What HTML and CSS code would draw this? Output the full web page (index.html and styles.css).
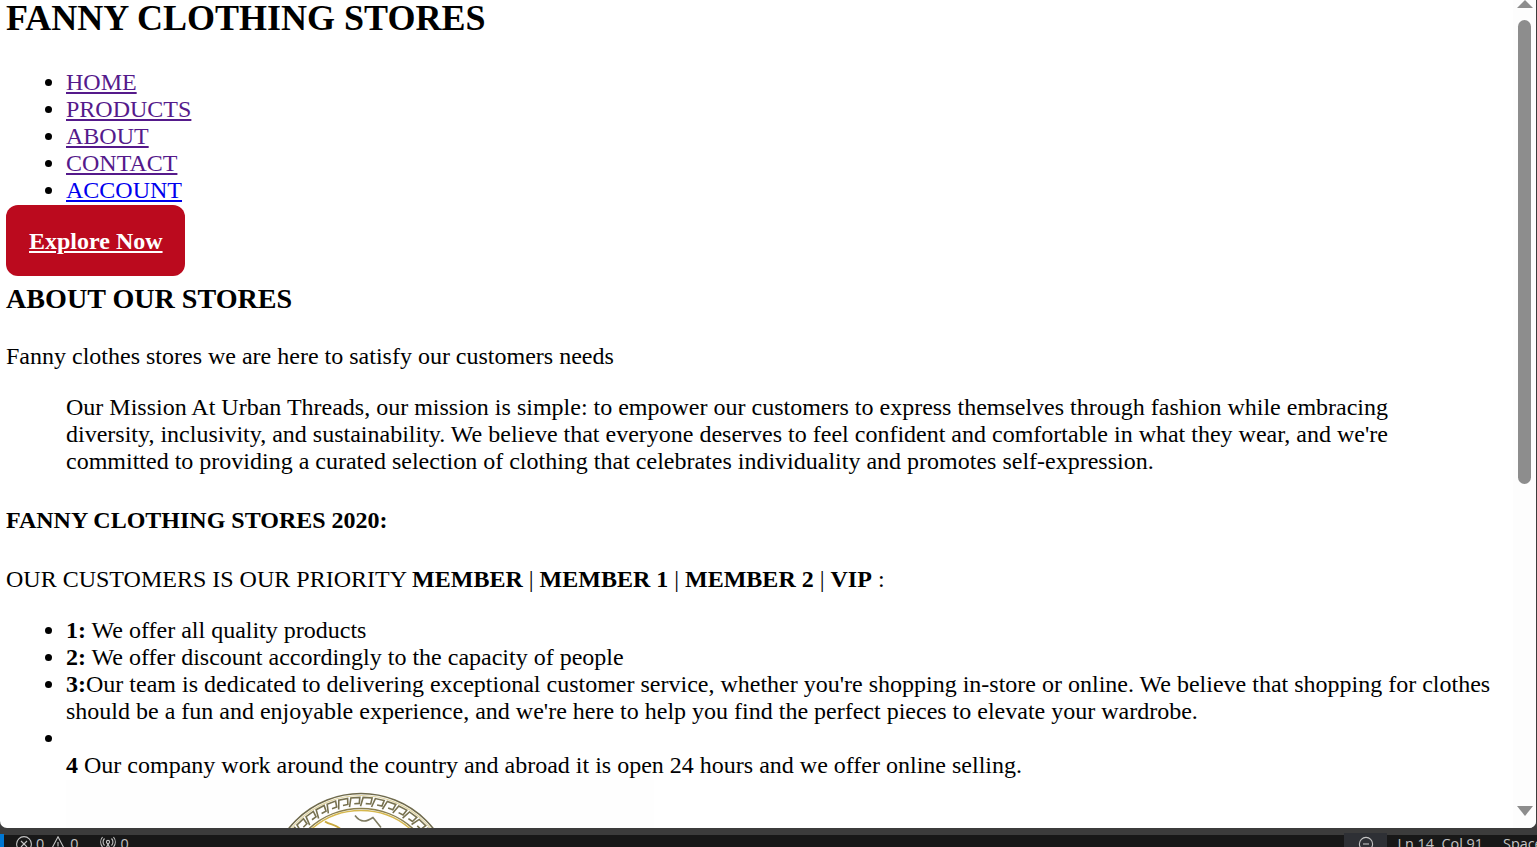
FILE: index.html
```html
<!DOCTYPE html>
<html lang="en">
<head>
<meta charset="utf-8">
<title>Fanny Clothing Stores</title>
<link rel="stylesheet" href="styles.css">
</head>
<body>
<div class="window">
  <div class="pane">
    <main class="page">
      <h1 class="title">FANNY CLOTHING STORES</h1>
      <ul class="list nav">
        <li><a class="visited" href="#home">HOME</a></li>
        <li><a class="visited" href="#products">PRODUCTS</a></li>
        <li><a class="visited" href="#about">ABOUT</a></li>
        <li><a class="visited" href="#contact">CONTACT</a></li>
        <li><a class="fresh" href="#account">ACCOUNT</a></li>
      </ul>
      <a class="cta" href="#explore">Explore Now</a>
      <h2 class="section">ABOUT OUR STORES</h2>
      <p class="intro">Fanny clothes stores we are here to satisfy our customers needs</p>
      <blockquote class="mission">Our Mission At Urban Threads, our mission is simple: to empower our customers to express themselves through fashion while embracing diversity, inclusivity, and sustainability. We believe that everyone deserves to feel confident and comfortable in what they wear, and we're committed to providing a curated selection of clothing that celebrates individuality and promotes self-expression.</blockquote>
      <h3 class="year">FANNY CLOTHING STORES 2020:</h3>
      <p class="priority">OUR CUSTOMERS IS OUR PRIORITY <b>MEMBER</b> | <b>MEMBER 1</b> | <b>MEMBER 2</b> | <b>VIP</b> :</p>
      <ul class="list offers">
        <li><b>1:</b> We offer all quality products</li>
        <li><b>2:</b> We offer discount accordingly to the capacity of people</li>
        <li><b>3:</b>Our team is dedicated to delivering exceptional customer service, whether you're shopping in-store or online. We believe that shopping for clothes should be a fun and enjoyable experience, and we're here to help you find the perfect pieces to elevate your wardrobe.</li>
        <li><br><b>4</b> Our company work around the country and abroad it is open 24 hours and we offer online selling.</li>
      </ul>
      <svg class="logo" viewBox="0 0 588 300" role="img" aria-label="Medallion logo">
        <rect width="588" height="300" fill="#fefefe"/>
        <g fill="none" transform="translate(295 105.5)">
          <circle r="92" stroke="#6f6a4c" stroke-width="1.6"/>
          <circle r="90" stroke="#e2d6a4" stroke-width="1.2"/>
          <circle r="77" stroke="#8a7f4e" stroke-width="1.6"/>
          <circle r="75" stroke="#d6b84e" stroke-width="1.4"/>
          <g stroke="#77714f" stroke-width="1.6">
            <path d="M-6-79L-4-88H5L4-82H-1" transform="rotate(-52)"/>
            <path d="M-6-79L-4-88H5L4-82H-1" transform="rotate(-44)"/>
            <path d="M-6-79L-4-88H5L4-82H-1" transform="rotate(-36)"/>
            <path d="M-6-79L-4-88H5L4-82H-1" transform="rotate(-28)"/>
            <path d="M-6-79L-4-88H5L4-82H-1" transform="rotate(-20)"/>
            <path d="M-6-79L-4-88H5L4-82H-1" transform="rotate(-12)"/>
            <path d="M-6-79L-4-88H5L4-82H-1" transform="rotate(-4)"/>
            <path d="M-6-79L-4-88H5L4-82H-1" transform="rotate(4)"/>
            <path d="M-6-79L-4-88H5L4-82H-1" transform="rotate(12)"/>
            <path d="M-6-79L-4-88H5L4-82H-1" transform="rotate(20)"/>
            <path d="M-6-79L-4-88H5L4-82H-1" transform="rotate(28)"/>
            <path d="M-6-79L-4-88H5L4-82H-1" transform="rotate(36)"/>
            <path d="M-6-79L-4-88H5L4-82H-1" transform="rotate(44)"/>
            <path d="M-6-79L-4-88H5L4-82H-1" transform="rotate(52)"/>
          </g>
          <path d="M-36-64C-30-60-26-62-20-56L-14-54" stroke="#c9a93f" stroke-width="2"/>
          <path d="M-6-70C0-62 6-64 12-68L20-58" stroke="#7d7a60" stroke-width="1.6"/>
        </g>
      </svg>
    </main>
    <div class="scrollbar">
      <span class="arrow up"></span>
      <span class="thumb"></span>
      <span class="arrow down"></span>
    </div>
  </div>
  <footer class="status">
    <span class="remote"></span>
    <span class="stat first">
      <svg class="ico" viewBox="0 0 16 16"><circle cx="8" cy="8" r="7.4"/><path d="M5 5l6 6M11 5l-6 6"/></svg>0
    </span>
    <span class="stat">
      <svg class="ico" viewBox="0 0 16 16"><path d="M8 .8L15.5 15H.5Z"/><path d="M8 6v4.5M8 11.5v1.5"/></svg>0
    </span>
    <span class="stat ports">
      <svg class="ico" viewBox="0 0 16 16"><circle cx="8" cy="6" r="1.6"/><path d="M8 8L5 15M8 8l3 7M6 13h4M4.5 2.5a5 5 0 0 0 0 7M11.5 2.5a5 5 0 0 1 0 7M2.5 1a8 8 0 0 0 0 10M13.5 1a8 8 0 0 1 0 10"/></svg>0
    </span>
    <span class="spacer"></span>
    <span class="zoom"><svg class="ico" viewBox="0 0 16 16"><circle cx="8" cy="8" r="6.6"/><path d="M5 8h6"/></svg></span>
    <span class="pos">Ln 14, Col 91</span>
    <span class="spaces">Spaces: 4</span>
  </footer>
</div>
</body>
</html>
```

FILE: styles.css
```css
html, body {
  margin: 0;
  height: 100%;
  overflow: hidden;
  background: #181818;
}
.window {
  display: flex;
  flex-direction: column;
  height: 847px;
  overflow: hidden;
  background: #3c3c3c;
}
.pane {
  display: flex;
  height: 828px;
  flex: none;
  background: #fff;
  border-radius: 0 0 7px 7px;
  overflow: hidden;
  margin-right: 1px;
}
.page {
  flex: 1;
  min-width: 0;
  overflow: hidden;
  padding: 0 6px;
  font: 24px/27px "Liberation Serif", "Times New Roman", serif;
  color: #000;
}
.title {
  margin: -2px 0 30px;
  font-size: 36px;
  line-height: 41px;
  font-weight: bold;
}
.list {
  margin: 0;
  padding-left: 60px;
}
.visited { color: #551a8b; }
.fresh { color: #0000ee; }
.cta {
  display: block;
  width: fit-content;
  margin-top: 1px;
  padding: 23px 22px 21px 23px;
  background: #bb0a1e;
  color: #fff;
  font-weight: bold;
  white-space: nowrap;
  border-radius: 12px;
}
.section {
  margin: 7px 0 0;
  font-size: 28.1px;
  line-height: 32px;
}
.intro { margin: 28px 0 0; }
.mission { margin: 24px 60px 0; }
.year { margin: 32px 0 0; font-size: 24px; }
.priority { margin: 32px 0 0; }
.offers { margin-top: 24px; }
.logo {
  display: block;
  width: 588px;
  height: 300px;
  margin: 1px 0 0 60px;
}
.scrollbar {
  position: relative;
  flex: none;
  width: 23px;
  background: #fdfdfd;
}
.thumb {
  position: absolute;
  left: 5px;
  top: 20px;
  width: 13px;
  height: 464px;
  border-radius: 7px;
  background: #8d8d8d;
}
.arrow {
  position: absolute;
  left: 4px;
  width: 0;
  height: 0;
  border-left: 8px solid transparent;
  border-right: 8px solid transparent;
}
.arrow.up { top: 0; border-bottom: 8px solid #8d8d8d; }
.arrow.down { bottom: 12px; border-top: 10px solid #8d8d8d; }
.status {
  display: flex;
  align-items: flex-start;
  height: 12px;
  margin-top: 7px;
  background: #181818;
  color: #c4c4c4;
  font: 14.4px/18px "Open Sans", "Noto Sans", sans-serif;
}
.remote {
  width: 4px;
  height: 13px;
  margin-top: -1px;
  background: #0078d4;
}
.stat {
  display: flex;
  align-items: flex-start;
  gap: 4px;
  margin-left: 6px;
}
.stat.first { margin-left: 12px; }
.stat.ports { margin-left: 22px; }
.ico {
  flex: none;
  width: 16px;
  height: 16px;
  margin-top: 1px;
  fill: none;
  stroke: #c4c4c4;
  stroke-width: 1.1;
}
.spacer { flex: 1; }
.zoom {
  display: flex;
  justify-content: center;
  width: 43px;
  height: 14px;
  margin-top: -2px;
  background: #2e3035;
}
.zoom .ico { margin-top: 3px; }
.pos { margin-left: 10px; white-space: nowrap; }
.spaces { margin-left: 20px; white-space: nowrap; width: 34px; }
```
